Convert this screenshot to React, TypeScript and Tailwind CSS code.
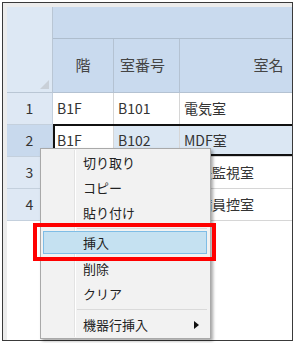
import React from "react";

const rows = [
  { n: "1", floor: "B1F", no: "B101", name: "電気室" },
  { n: "2", floor: "B1F", no: "B102", name: "MDF室" },
  { n: "3", floor: "", no: "", name: "中央監視室" },
  { n: "4", floor: "", no: "", name: "警備員控室" },
];

function MenuItem({ label, arrow }: { label: string; arrow?: boolean }) {
  return (
    <div className="relative h-[25px] ml-[2px] mr-[3px] pl-[40px] flex items-center text-[13px] text-[#222]">
      {label}
      {arrow && (
        <svg className="absolute right-[8px] top-[9px]" width="5" height="8" viewBox="0 0 5 8">
          <polygon points="0,0 5,4 0,8" fill="#111" />
        </svg>
      )}
    </div>
  );
}

function Sep() {
  return (
    <div className="h-[6px] flex items-center ml-[36px] mr-[3px]">
      <div className="h-px w-full bg-[#dadada]" />
    </div>
  );
}

export default function App() {
  return (
    <div
      className="w-[300px] h-[343px] bg-white relative overflow-hidden"
      style={{ fontFamily: '"Noto Sans CJK JP", "Noto Sans", sans-serif' }}
    >
      <div className="ml-[2px] mt-[2px] w-[291px] h-[339px] border border-[#3a3a3a] bg-[#ececec] pl-[4px] pt-[4px] overflow-hidden">
        <div className="flex h-full bg-white">
          {/* row header column */}
          <div className="w-[46px] shrink-0 flex flex-col">
            <div className="h-[86px] bg-[#dde8f4] border-r border-b border-[#b9c6d4] relative">
              <svg className="absolute right-[3px] bottom-[3px]" width="9" height="9" viewBox="0 0 9 9">
                <polygon points="9,0 9,9 0,9" fill="#c9d0d8" />
              </svg>
            </div>
            {rows.map((r, i) => (
              <div
                key={r.n}
                className={`h-[32px] border-r border-b border-[#c4d0dd] flex items-center justify-center text-[14px] text-[#333] ${
                  i === 1 ? "bg-[#c8d9ed]" : "bg-[#dee8f4]"
                }`}
              >
                {r.n}
              </div>
            ))}
          </div>
          {/* data area */}
          <div className="flex-1 flex flex-col overflow-hidden">
            <div className="h-[32px] shrink-0 bg-[#c9daee] border-b border-[#aebdcd] w-[400px]" />
            <div className="h-[54px] shrink-0 flex bg-[#c9daee] border-b border-[#b4c2d2] text-[15px] text-[#444]">
              <div className="w-[61px] shrink-0 border-r border-[#b4c2d2] flex items-center justify-center">階</div>
              <div className="w-[66px] shrink-0 border-r border-[#b4c2d2] flex items-center justify-center pr-[8px]">室番号</div>
              <div className="w-[178px] shrink-0 border-r border-[#b4c2d2] flex items-center justify-center">室名</div>
            </div>
            {rows.map((r, i) => {
              const sel = i === 1;
              return (
                <div key={r.n} className="relative h-[32px] shrink-0 flex text-[14px] text-[#333]">
                  <div className="w-[61px] shrink-0 border-r border-b border-[#d6d6d6] bg-white pl-[4px] flex items-center">
                    {r.floor}
                  </div>
                  <div
                    className={`w-[66px] shrink-0 border-r border-b border-[#d6d6d6] pl-[4px] flex items-center ${
                      sel ? "bg-[#dbe7f3]" : "bg-white"
                    }`}
                  >
                    {r.no}
                  </div>
                  <div
                    className={`w-[178px] shrink-0 border-r border-b border-[#d6d6d6] pl-[4px] flex items-center ${
                      sel ? "bg-[#dbe7f3]" : "bg-white"
                    }`}
                  >
                    {r.name}
                  </div>
                  {sel && (
                    <div className="absolute left-0 top-[-1px] w-[260px] h-[32px] border-2 border-[#111] pointer-events-none" />
                  )}
                </div>
              );
            })}
          </div>
        </div>
      </div>

      {/* context menu */}
      <div className="absolute left-[40px] top-[148px] w-[171px] bg-[#f2f2f2] border border-[#a9a9a9] shadow-[2px_2px_3px_rgba(0,0,0,0.35)] pt-[1px] pb-[1px]">
        <div className="absolute left-[33px] top-[1px] bottom-[1px] w-px bg-[#e3e3e3]" />
        <div className="absolute left-[34px] top-[1px] bottom-[1px] w-px bg-white" />
        <div className="relative">
          <MenuItem label="切り取り" />
          <MenuItem label="コピー" />
          <MenuItem label="貼り付け" />
          <Sep />
          <div className="relative h-[25px] ml-[2px] mr-[3px]">
            <div className="h-[23px] bg-[#c5e1f1] border border-[#7fbde6] pl-[39px] flex items-center text-[13px] text-[#222]">
              挿入
            </div>
          </div>
          <MenuItem label="削除" />
          <MenuItem label="クリア" />
          <Sep />
          <MenuItem label="機器行挿入" arrow />
        </div>
      </div>

      {/* red highlight box */}
      <div className="absolute left-[33px] top-[223px] w-[183px] h-[38px] border-4 border-[#ff0000]" />
    </div>
  );
}
